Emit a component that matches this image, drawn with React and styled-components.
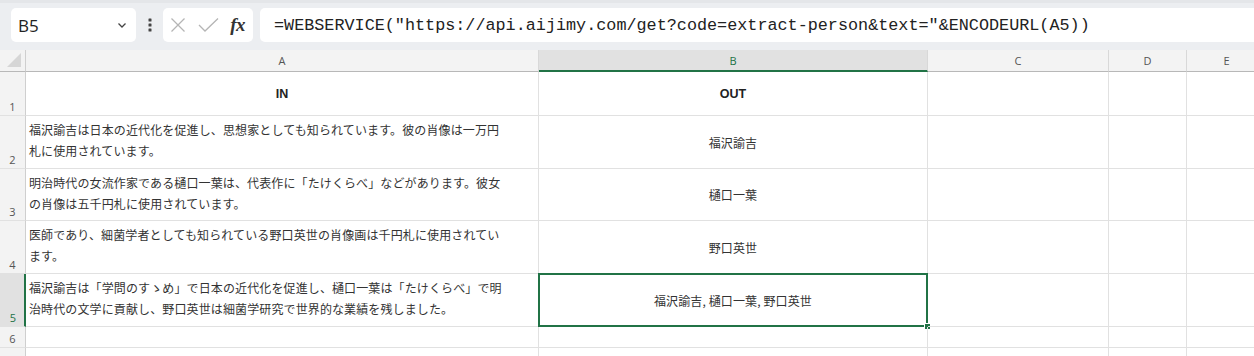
import React from "react";
import styled, { createGlobalStyle, css } from "styled-components";

const GREEN = "#217346";
const GRID = "#e1e1e1";

const Global = createGlobalStyle`
  * { box-sizing: border-box; }
  html, body { margin: 0; padding: 0; background: #ffffff; }
  body { width: 1254px; height: 356px; overflow: hidden; font-family: "Noto Sans CJK JP", "Noto Sans", sans-serif; }
`;

const Page = styled.div`
  width: 1254px;
  height: 356px;
  overflow: hidden;
  display: flex;
  flex-direction: column;
`;

const Toolbar = styled.div`
  height: 50px;
  flex: none;
  display: flex;
  align-items: center;
  padding-left: 11px;
  background: #eceef1;
  border-top: 3px solid #e4e6e9;
`;

const Box = styled.div`
  height: 34px;
  background: #ffffff;
  border-radius: 5px;
  display: flex;
  align-items: center;
  margin-top: -3px;
`;

const NameBox = styled(Box)`
  width: 125px;
  padding: 0 8px 0 7px;
  justify-content: space-between;
  font-family: "Open Sans", "Noto Sans", sans-serif;
  font-size: 17px;
  color: #222;
`;

const Dots = styled.div`
  width: 27px;
  display: flex;
  justify-content: center;
  margin-top: -3px;
`;

const FxBox = styled(Box)`
  width: 90px;
  padding: 0 6px 0 7px;
  justify-content: space-between;
`;

const FormulaBox = styled(Box)`
  flex: 1;
  margin-left: 7px;
  margin-right: -20px;
  padding-left: 14px;
  font-family: "Liberation Mono", "DejaVu Sans Mono", monospace;
  font-size: 16.8px;
  color: #222;
  white-space: nowrap;
`;

const Fx = styled.span`
  font-family: "Liberation Serif", "DejaVu Serif", serif;
  font-style: italic;
  font-weight: bold;
  font-size: 19px;
  color: #333;
  letter-spacing: -0.5px;
  padding-right: 2px;
`;

const Sheet = styled.div`
  display: grid;
  grid-template-columns: 26px 513px 389px 181px 78px 80px;
  grid-template-rows: 22px 44px 53px 52px 53px 53px 21px 30px;
`;

const Corner = styled.div`
  background: #f3f3f3;
  border-right: 1px solid #cfcfcf;
  border-bottom: 1px solid #b8b8b8;
  display: flex;
  align-items: flex-end;
  justify-content: flex-end;
  padding: 0 4px 4px 0;
`;

const ColHead = styled.div`
  background: ${(p) => (p.$active ? "#e1e1e1" : "#f3f3f3")};
  border-right: 1px solid #d8d8d8;
  border-bottom: ${(p) => (p.$active ? `2px solid ${GREEN}` : "1px solid #b8b8b8")};
  display: flex;
  align-items: center;
  justify-content: center;
  font-family: "Open Sans", "Noto Sans", sans-serif;
  font-size: 11px;
  color: ${(p) => (p.$active ? GREEN : "#555")};
  padding-top: ${(p) => (p.$active ? "1px" : "0")};
`;

const RowHead = styled.div`
  background: ${(p) => (p.$active ? "#e1e1e1" : "#f3f3f3")};
  border-right: ${(p) => (p.$active ? `2px solid ${GREEN}` : "1px solid #cfcfcf")};
  border-bottom: 1px solid ${GRID};
  display: flex;
  align-items: flex-end;
  justify-content: center;
  padding-bottom: 1px;
  font-family: "Open Sans", "Noto Sans", sans-serif;
  font-size: 11px;
  color: ${(p) => (p.$active ? GREEN : "#555")};
  padding-left: ${(p) => (p.$active ? "2px" : "0")};
`;

const Cell = styled.div`
  position: relative;
  border-right: 1px solid ${GRID};
  border-bottom: 1px solid ${GRID};
  font-size: 12px;
  letter-spacing: 0.12px;
  color: #333;
  white-space: nowrap;
  overflow: visible;
  ${(p) =>
    p.$wrap &&
    css`
      padding: 4px 0 0 3px;
      line-height: 20.5px;
    `}
  ${(p) =>
    p.$center &&
    css`
      display: flex;
      align-items: center;
      justify-content: center;
    `}
`;

const Line = styled.div`
  display: block;
`;

const Head = styled.span`
  font-family: "Liberation Sans", "Noto Sans", sans-serif;
  font-weight: bold;
  font-size: 12.5px;
  letter-spacing: 0;
  color: #222;
`;

const Selection = styled.div`
  position: absolute;
  left: -1px;
  top: -1px;
  right: -1px;
  bottom: -1px;
  border: 2px solid ${GREEN};
  pointer-events: none;
`;

const Handle = styled.div`
  position: absolute;
  right: -5px;
  bottom: -5px;
  width: 7px;
  height: 7px;
  background: ${GREEN};
  border: 1px solid #ffffff;
`;

const Chevron = () => (
  <svg width="12" height="12" viewBox="0 0 12 12" fill="none" stroke="#444" strokeWidth="1.3">
    <path d="M2.5 4.5 L6 8 L9.5 4.5" />
  </svg>
);

const VDots = () => (
  <svg width="4" height="14" viewBox="0 0 4 14" fill="#444">
    <rect x="0.5" y="0.5" width="3" height="3" rx="0.5" />
    <rect x="0.5" y="5.5" width="3" height="3" rx="0.5" />
    <rect x="0.5" y="10.5" width="3" height="3" rx="0.5" />
  </svg>
);

const XIcon = () => (
  <svg width="16" height="16" viewBox="0 0 16 16" fill="none" stroke="#b5b5b5" strokeWidth="1.3">
    <path d="M1.5 1.5 L14.5 14.5 M14.5 1.5 L1.5 14.5" />
  </svg>
);

const CheckIcon = () => (
  <svg width="21" height="16" viewBox="0 0 21 16" fill="none" stroke="#b5b5b5" strokeWidth="1.3">
    <path d="M1 8 L7 14 L20 1.5" />
  </svg>
);

const CornerTri = () => (
  <svg width="14" height="14" viewBox="0 0 14 14">
    <path d="M14 0 L14 14 L0 14 Z" fill="#d6d6d6" />
  </svg>
);

const cols = ["A", "B", "C", "D", "E"];

const rows = [
  { n: 1, a: null, b: "OUT", head: true },
  {
    n: 2,
    a: ["福沢諭吉は日本の近代化を促進し、思想家としても知られています。彼の肖像は一万円", "札に使用されています。"],
    b: "福沢諭吉",
  },
  {
    n: 3,
    a: ["明治時代の女流作家である樋口一葉は、代表作に「たけくらべ」などがあります。彼女", "の肖像は五千円札に使用されています。"],
    b: "樋口一葉",
  },
  {
    n: 4,
    a: ["医師であり、細菌学者としても知られている野口英世の肖像画は千円札に使用されてい", "ます。"],
    b: "野口英世",
  },
  {
    n: 5,
    a: ["福沢諭吉は「学問のすゝめ」で日本の近代化を促進し、樋口一葉は「たけくらべ」で明", "治時代の文学に貢献し、野口英世は細菌学研究で世界的な業績を残しました。"],
    b: "福沢諭吉, 樋口一葉, 野口英世",
    active: true,
  },
  { n: 6, label: "6" },
  { n: 7, label: "" },
];

export default function App() {
  return (
    <Page>
      <Global />
      <Toolbar>
        <NameBox>
          <span>B5</span>
          <Chevron />
        </NameBox>
        <Dots>
          <VDots />
        </Dots>
        <FxBox>
          <XIcon />
          <CheckIcon />
          <Fx>fx</Fx>
        </FxBox>
        <FormulaBox>=WEBSERVICE("https://api.aijimy.com/get?code=extract-person&amp;text="&amp;ENCODEURL(A5))</FormulaBox>
      </Toolbar>
      <Sheet>
        <Corner>
          <CornerTri />
        </Corner>
        {cols.map((c) => (
          <ColHead key={c} $active={c === "B"}>
            {c}
          </ColHead>
        ))}
        {rows.map((r) => (
          <React.Fragment key={r.n}>
            <RowHead $active={r.active}>{r.label !== undefined ? r.label : r.n}</RowHead>
            {r.head ? (
              <Cell $center>
                <Head>IN</Head>
              </Cell>
            ) : (
              <Cell $wrap>
                {r.a && r.a.map((l, i) => <Line key={i}>{l}</Line>)}
              </Cell>
            )}
            <Cell $center>
              {r.head ? <Head>{r.b}</Head> : r.b}
              {r.active && (
                <Selection>
                  <Handle />
                </Selection>
              )}
            </Cell>
            <Cell />
            <Cell />
            <Cell />
          </React.Fragment>
        ))}
      </Sheet>
    </Page>
  );
}
